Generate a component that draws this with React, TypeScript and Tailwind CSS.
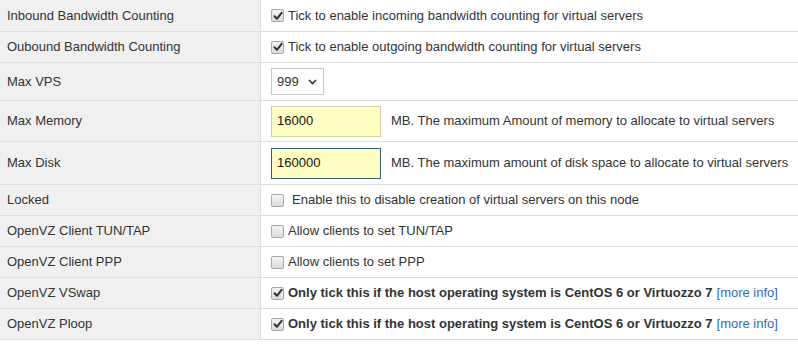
import React from "react";

const Check = ({ checked }: { checked: boolean }) => (
	<span className="inline-flex h-[13px] w-[13px] shrink-0 items-center justify-center rounded-[2px] border border-[#a8a8a8] bg-gradient-to-b from-[#f4f4f4] to-[#dcdcdc]">
		{checked && (
			<svg width="10" height="10" viewBox="0 0 10 10">
				<path d="M1.5 5.2 L3.9 7.8 L8.6 1.8" fill="none" stroke="#333" strokeWidth="2" strokeLinecap="round" strokeLinejoin="round" />
			</svg>
		)}
	</span>
);

const Row = ({ label, h, children }: { label: string; h: string; children: React.ReactNode }) => (
	<div className={`flex border-b border-[#dddddd] ${h}`}>
		<div className="flex w-[261px] shrink-0 items-center border-r border-[#dddddd] bg-[#f0f0f0] pl-[7px]">{label}</div>
		<div className="flex flex-1 items-center pl-[10px]">{children}</div>
	</div>
);

export default function App() {
	return (
		<div className="h-[345px] w-[798px] bg-white text-[13px] text-[#333] font-['Liberation_Sans',Arial,sans-serif]">
			<Row label="Inbound Bandwidth Counting" h="h-[32px]">
				<Check checked />
				<span className="ml-[4px]">Tick to enable incoming bandwidth counting for virtual servers</span>
			</Row>
			<Row label="Oubound Bandwidth Counting" h="h-[31px]">
				<Check checked />
				<span className="ml-[4px]">Tick to enable outgoing bandwidth counting for virtual servers</span>
			</Row>
			<Row label="Max VPS" h="h-[38px]">
				<div className="flex h-[27px] w-[53px] items-center justify-between border border-[#c8c8c8] bg-white pl-[5px] pr-[6px]">
					<span>999</span>
					<svg width="9" height="6" viewBox="0 0 9 6">
						<path d="M1 1 L4.5 4.5 L8 1" fill="none" stroke="#333" strokeWidth="1.6" />
					</svg>
				</div>
			</Row>
			<Row label="Max Memory" h="h-[41px]">
				<div className="flex h-[31px] w-[110px] items-center border border-[#cfcfa8] bg-[#ffffc4] pl-[5px] text-[#111]">16000</div>
				<span className="ml-[10px]">MB. The maximum Amount of memory to allocate to virtual servers</span>
			</Row>
			<Row label="Max Disk" h="h-[43px]">
				<div className="flex h-[31px] w-[110px] items-center border border-[#2f6470] bg-[#ffffc4] pl-[5px] text-[#111]">160000</div>
				<span className="ml-[10px]">MB. The maximum amount of disk space to allocate to virtual servers</span>
			</Row>
			<Row label="Locked" h="h-[31px]">
				<Check checked={false} />
				<span className="ml-[8px]">Enable this to disable creation of virtual servers on this node</span>
			</Row>
			<Row label="OpenVZ Client TUN/TAP" h="h-[31px]">
				<Check checked={false} />
				<span className="ml-[4px]">Allow clients to set TUN/TAP</span>
			</Row>
			<Row label="OpenVZ Client PPP" h="h-[31px]">
				<Check checked={false} />
				<span className="ml-[4px]">Allow clients to set PPP</span>
			</Row>
			<Row label="OpenVZ VSwap" h="h-[31px]">
				<Check checked />
				<span className="ml-[4px] font-bold">Only tick this if the host operating system is CentOS 6 or Virtuozzo 7</span>
				<a className="ml-[4px] text-[#2b6cc4]">[more info]</a>
			</Row>
			<Row label="OpenVZ Ploop" h="h-[31px]">
				<Check checked />
				<span className="ml-[4px] font-bold">Only tick this if the host operating system is CentOS 6 or Virtuozzo 7</span>
				<a className="ml-[4px] text-[#2b6cc4]">[more info]</a>
			</Row>
		</div>
	);
}
